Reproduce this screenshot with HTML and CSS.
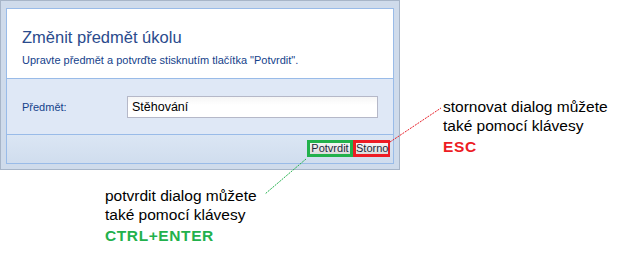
FILE: index.html
```html
<!DOCTYPE html>
<html lang="cs">
<head>
<meta charset="utf-8">
<link rel="stylesheet" href="styles.css">
</head>
<body>
<div class="page">
  <div class="dialog">
    <div class="panel">
      <div class="header">
        <div class="title">Změnit předmět úkolu</div>
        <div class="subtitle">Upravte předmět a potvrďte stisknutím tlačítka "Potvrdit".</div>
      </div>
      <div class="content">
        <label class="label">Předmět:</label>
        <div class="input">Stěhování</div>
      </div>
      <div class="footer">
        <div class="hl hl-green"><span class="btn">Potvrdit</span></div>
        <div class="hl hl-red"><span class="btn">Storno</span></div>
      </div>
    </div>
  </div>

  <div class="note note-esc">
    <div>stornovat dialog můžete</div>
    <div>také pomocí klávesy</div>
    <div class="key key-red">ESC</div>
  </div>
  <div class="note note-enter">
    <div>potvrdit dialog můžete</div>
    <div>také pomocí klávesy</div>
    <div class="key key-green">CTRL+ENTER</div>
  </div>

  <svg class="lines" width="622" height="264" viewBox="0 0 622 264">
    <line x1="390" y1="142" x2="441" y2="108" stroke="#e8202a" stroke-width="1" stroke-dasharray="2 1"/>
    <line x1="306" y1="159" x2="265" y2="194" stroke="#22b14c" stroke-width="1" stroke-dasharray="2 1"/>
  </svg>
</div>
</body>
</html>
```

FILE: styles.css
```css
* { box-sizing: border-box; }
html, body { margin: 0; padding: 0; background: #fff; }
body { font-family: "Liberation Sans", Arial, sans-serif; }

.page {
  position: relative;
  width: 622px;
  height: 264px;
}

.dialog {
  width: 400px;
  height: 170px;
  border: 1px solid #a7b5c8;
  background: #cfdbeb;
  padding: 7px 5px 5px 5px;
}

.panel {
  border: 1px solid #99bbe8;
  height: 156px;
  display: flex;
  flex-direction: column;
}

.header {
  background: #fff;
  height: 70px;
  border-bottom: 1px solid #99bbe8;
  padding: 18px 0 0 15px;
}

.title {
  font-size: 16.5px;
  color: #2a4b8d;
  line-height: 20px;
}

.subtitle {
  margin-top: 7px;
  font-size: 11px;
  color: #15428b;
  line-height: 13px;
}

.content {
  background: #dfe8f6;
  height: 56px;
  border-bottom: 1px solid #99bbe8;
  display: flex;
  align-items: center;
  padding: 0 0 0 15px;
}

.label {
  width: 105px;
  font-size: 11px;
  color: #15428b;
}

.input {
  width: 251px;
  height: 22px;
  border: 1px solid #b5b8c8;
  background: linear-gradient(#f6f6f6, #fff 40%);
  font-size: 12.5px;
  color: #000;
  padding: 3px 0 0 4px;
  line-height: 14px;
}

.footer {
  flex: 1;
  background: linear-gradient(#dbe6f4, #d0ddee);
  display: flex;
  justify-content: flex-end;
  align-items: center;
  padding: 0 3px 1px 0;
}

.hl {
  border: 3px solid;
  height: 17px;
  display: flex;
}
.hl-green { border-color: #22b14c; width: 46px; }
.hl-red { border-color: #ed1c24; width: 37px; }

.btn {
  flex: 1;
  background: linear-gradient(#f5f5f5, #dcdcdc);
  font-size: 11px;
  color: #1e2a3c;
  line-height: 11px;
  text-align: center;
  white-space: nowrap;
}

.note {
  position: absolute;
  font-size: 15.5px;
  line-height: 19px;
  color: #000;
  white-space: nowrap;
}
.note-esc { left: 443px; top: 97px; }
.note-enter { left: 105px; top: 186px; }

.key {
  font-weight: bold;
  letter-spacing: 0.6px;
  margin-top: 2px;
}
.key-red { color: #ed1c24; }
.key-green { color: #22b14c; }

.lines {
  position: absolute;
  left: 0;
  top: 0;
  pointer-events: none;
}
```
